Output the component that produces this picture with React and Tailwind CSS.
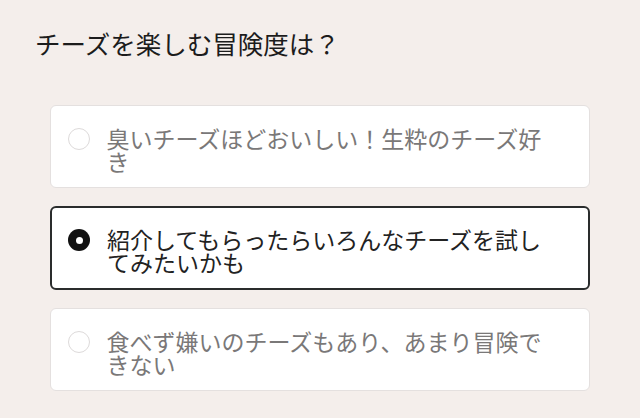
import React from "react";

const options = [
  { text: "臭いチーズほどおいしい！生粋のチーズ好き", selected: false },
  { text: "紹介してもらったらいろんなチーズを試してみたいかも", selected: true },
  { text: "食べず嫌いのチーズもあり、あまり冒険できない", selected: false },
];

function Radio({ selected }) {
  if (selected) {
    return (
      <div className="w-[22px] h-[22px] rounded-full bg-[#111] flex items-center justify-center shrink-0">
        <div className="w-[7px] h-[7px] rounded-full bg-white" />
      </div>
    );
  }
  return <div className="w-[22px] h-[22px] rounded-full border-[1.5px] border-[#dddada] bg-white shrink-0" />;
}

export default function App() {
  return (
    <div
      className="w-[640px] h-[418px] bg-[#f4eeeb] overflow-hidden"
      style={{ fontFamily: '"Noto Sans CJK JP", "Noto Sans", sans-serif' }}
    >
      <div className="pt-[24px] pl-[35px] text-[25.5px] leading-[38px] text-[#1c1c1c]">
        チーズを楽しむ冒険度は？
      </div>
      <div className="flex flex-col gap-[18px] px-[50px] pt-[43px]">
        {options.map((o, i) => (
          <div
            key={i}
            className={
              o.selected
                ? "h-[84px] rounded-[6px] bg-white border-2 border-[#2a2c2c] flex items-start pl-[16px] pr-[34px] pt-[21px]"
                : "h-[83px] rounded-[6px] bg-white border-[1.5px] border-[#e4e0df] flex items-start pl-[16.5px] pr-[34.5px] pt-[21.5px]"
            }
          >
            <Radio selected={o.selected} />
            <div
              className={
                "ml-[17px] -mt-[1px] text-[23px] leading-[23px] " +
                (o.selected ? "text-[#222]" : "text-[#7a7878]")
              }
            >
              {o.text}
            </div>
          </div>
        ))}
      </div>
    </div>
  );
}
